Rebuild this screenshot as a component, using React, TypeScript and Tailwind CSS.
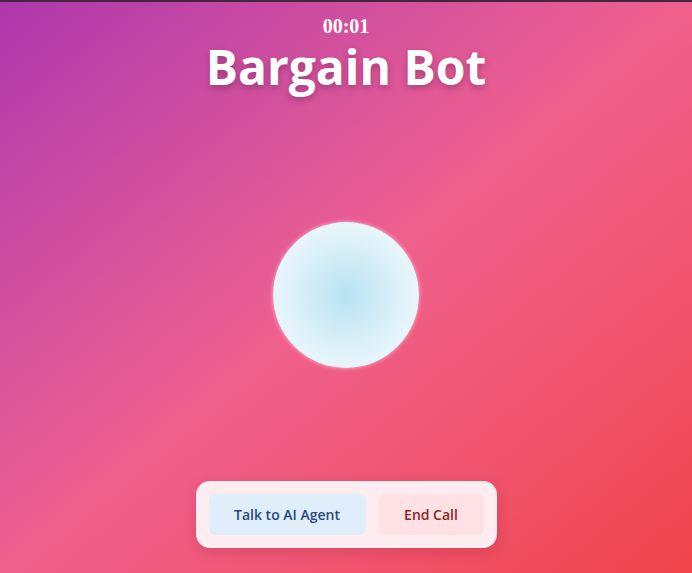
export default function App() {
  return (
    <div className="relative flex min-h-screen w-full flex-col items-center overflow-hidden bg-gradient-to-br from-[#ae36ad] via-[#f0608d] to-[#f0444a]">
      <div className="h-[2px] w-full bg-[#43273f]" />
      <div
        className="mt-[14px] text-[20px] font-bold leading-5 text-white"
        style={{ fontFamily: '"Liberation Serif", serif' }}
      >
        00:01
      </div>
      <h1
        className="mt-[5px] text-[48px] font-bold leading-[52px] text-white [text-shadow:0_3px_6px_rgba(80,20,60,0.35)]"
        style={{ fontFamily: '"Open Sans", sans-serif' }}
      >
        Bargain Bot
      </h1>
      <div className="mt-[129px] h-[146px] w-[146px] rounded-full bg-[radial-gradient(circle_at_center,#b8e2f2_0%,#dff2f9_55%,#f6fcfe_100%)] shadow-[0_0_4px_rgba(255,255,255,0.6)]" />
      <div
        className="mt-[113px] flex gap-[13px] rounded-[14px] bg-[#fdedf0] p-[13px] shadow-[0_4px_14px_rgba(120,20,40,0.2)]"
        style={{ fontFamily: '"Open Sans", sans-serif' }}
      >
        <button className="h-[41px] w-[157px] rounded-md bg-[#dfeefa] text-[14px] font-semibold text-[#28497a]">
          Talk to AI Agent
        </button>
        <button className="h-[41px] w-[105px] rounded-md bg-[#fde1e4] text-[14px] font-semibold text-[#8c2428]">
          End Call
        </button>
      </div>
    </div>
  );
}
